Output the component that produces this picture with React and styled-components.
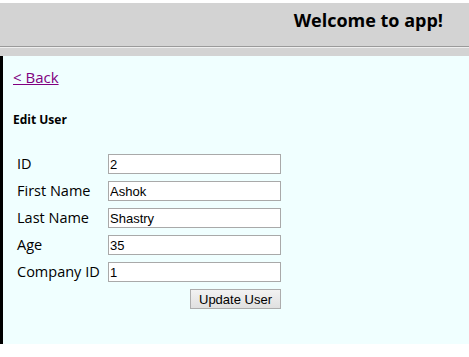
import React from "react";
import styled, { createGlobalStyle } from "styled-components";

const Global = createGlobalStyle`
  html, body { margin: 0; padding: 0; background: #fff; }
  body { font-family: "Open Sans", "Noto Sans", sans-serif; }
`;

const Page = styled.div`
  padding-top: 3px;
`;

const Header = styled.header`
  background: #d3d3d3;
  height: 53px;
  display: flex;
  flex-direction: column;
`;

const Title = styled.h1`
  margin: 0;
  padding: 5px 26px 0 0;
  height: 38px;
  box-sizing: border-box;
  text-align: right;
  font-size: 18px;
  font-weight: 700;
  line-height: 24px;
  color: #000;
`;

const Rule = styled.hr`
  margin: 5px 0 0;
  border: 0;
  border-top: 1px solid #9a9a9a;
  border-bottom: 1px solid #eeeeee;
  height: 0;
`;

const Content = styled.main`
  background: #f0ffff;
  border-left: 3px solid #000;
  height: 288px;
  box-sizing: border-box;
  padding: 11px 0 0 10px;
  display: flex;
  flex-direction: column;
  align-items: flex-start;
`;

const BackLink = styled.a`
  color: #800080;
  font-size: 15px;
  line-height: 20px;
  text-decoration: underline;
`;

const Heading = styled.h2`
  margin: 25px 0 0;
  font-size: 12px;
  font-weight: 700;
  line-height: 16px;
`;

const Form = styled.form`
  margin: 26px 0 0 4px;
  display: grid;
  grid-template-columns: 91px 173px;
  row-gap: 7px;
  align-items: center;
`;

const Label = styled.label`
  font-size: 14.5px;
  line-height: 20px;
  color: #000;
  white-space: nowrap;
`;

const Input = styled.input`
  box-sizing: border-box;
  width: 173px;
  height: 20px;
  border: 1px solid #a9a9a9;
  background: #fff;
  padding: 0 1px;
  font-family: "Liberation Sans", Arial, sans-serif;
  font-size: 13px;
  color: #000;
  outline: none;
`;

const Actions = styled.div`
  grid-column: 2;
  display: flex;
  justify-content: flex-end;
`;

const Button = styled.button`
  box-sizing: border-box;
  width: 91px;
  height: 20px;
  border: 1px solid #adadad;
  border-radius: 0;
  background: linear-gradient(#f2f2f2, #e0e0e0);
  font-family: "Liberation Sans", Arial, sans-serif;
  font-size: 13px;
  color: #000;
  padding: 0;
`;

const fields = [
  { id: "id", label: "ID", value: "2" },
  { id: "first", label: "First Name", value: "Ashok" },
  { id: "last", label: "Last Name", value: "Shastry" },
  { id: "age", label: "Age", value: "35" },
  { id: "company", label: "Company ID", value: "1" },
];

export default function App() {
  return (
    <Page>
      <Global />
      <Header>
        <Title>Welcome to app!</Title>
        <Rule />
      </Header>
      <Content>
        <BackLink href="#">&lt; Back</BackLink>
        <Heading>Edit User</Heading>
        <Form onSubmit={(e) => e.preventDefault()}>
          {fields.map((f) => (
            <React.Fragment key={f.id}>
              <Label htmlFor={f.id}>{f.label}</Label>
              <Input id={f.id} defaultValue={f.value} />
            </React.Fragment>
          ))}
          <Actions>
            <Button type="submit">Update User</Button>
          </Actions>
        </Form>
      </Content>
    </Page>
  );
}
